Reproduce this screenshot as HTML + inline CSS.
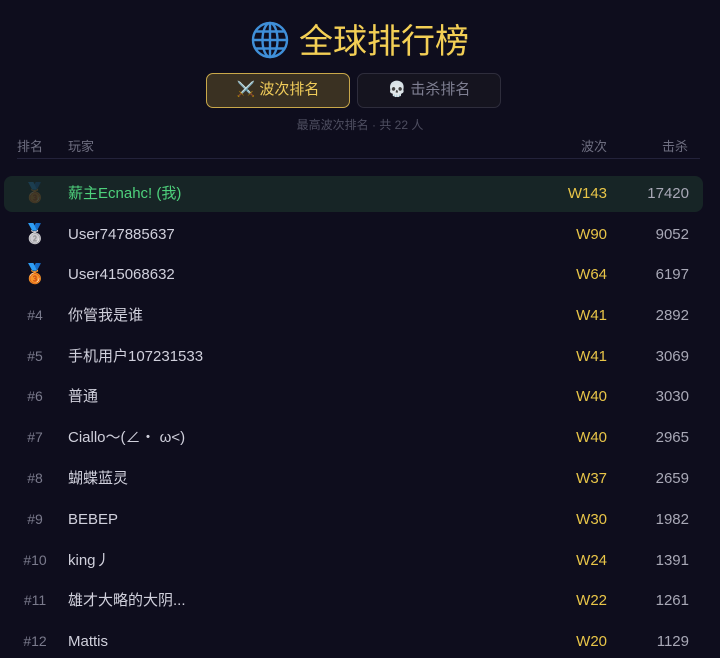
<!DOCTYPE html><html><head><meta charset="utf-8"><style>
body{margin:0;width:720px;height:658px;background:#0e0d1d;font-family:"Liberation Sans","Noto Sans CJK SC",sans-serif;overflow:hidden;position:relative;color:#c9c9d6}
.a{position:absolute;white-space:nowrap}
.title{left:0;width:720px;top:20px;text-align:center;font-size:34px;color:#f3cf55;font-weight:normal;line-height:44px}
.btn{top:73px;height:35px;border-radius:7px;box-sizing:border-box;font-size:15px;line-height:32px;text-align:center}
.hd{top:136px;font-size:13px;color:#6e6e80}
.row{font-size:15px;line-height:20px}
.rk{left:10px;width:50px;text-align:center;color:#7a7a8c;font-size:14px;top:-1px;line-height:20px}
.md{font-size:19px;left:10px;width:50px;text-align:center;top:-1px;line-height:22px}
.nm{left:68px;color:#d0d0dc;top:0}
.wv{right:113px;color:#e8c548;text-align:right;top:0}
.kl{right:31px;color:#a8a8b6;text-align:right;top:0}
</style></head><body>
<div class="a title"><span style="display:inline-block;vertical-align:-6px;margin-right:10px"><svg width="38" height="38" viewBox="0 0 38 38" fill="none" stroke="#3f8fd8" stroke-width="2.4"><circle cx="19" cy="19" r="17"/><ellipse cx="19" cy="19" rx="7.5" ry="17"/><line x1="19" y1="2" x2="19" y2="36"/><line x1="2" y1="19" x2="36" y2="19"/><line x1="5" y1="10.5" x2="33" y2="10.5"/><line x1="5" y1="27.5" x2="33" y2="27.5"/></svg></span>全球排行榜</div>
<div class="a btn" style="left:206px;width:144px;background:#3a3122;border:1.5px solid #c9a84a;color:#f0cc5a">⚔️ 波次排名</div>
<div class="a btn" style="left:357px;width:144px;background:#15141f;border:1.5px solid #2e2d3c;color:#7f7f92">💀 击杀排名</div>
<div class="a" style="left:0;width:720px;top:116px;text-align:center;font-size:12px;color:#4e4e60">最高波次排名 · 共 22 人</div>
<div class="a hd" style="left:17px">排名</div><div class="a hd" style="left:68px">玩家</div><div class="a hd" style="left:581px">波次</div><div class="a hd" style="left:662px">击杀</div>
<div class="a" style="left:17px;top:158px;width:683px;height:1px;background:#23223a"></div>
<div class="a" style="left:4px;top:176px;width:699px;height:36px;background:#172526;border-radius:8px"></div>
<div class="a row" style="top:184px;left:0;width:720px;height:20px"><span class="a md" style="opacity:.2">🥉</span><span class="a nm" style="color:#4ed17c">薪主Ecnahc! (我)</span><span class="a wv">W143</span><span class="a kl">17420</span></div>
<div class="a row" style="top:225px;left:0;width:720px;height:20px"><span class="a md">🥈</span><span class="a nm">User747885637</span><span class="a wv">W90</span><span class="a kl">9052</span></div>
<div class="a row" style="top:265px;left:0;width:720px;height:20px"><span class="a md">🥉</span><span class="a nm">User415068632</span><span class="a wv">W64</span><span class="a kl">6197</span></div>
<div class="a row" style="top:306px;left:0;width:720px;height:20px"><span class="a rk">#4</span><span class="a nm">你管我是谁</span><span class="a wv">W41</span><span class="a kl">2892</span></div>
<div class="a row" style="top:347px;left:0;width:720px;height:20px"><span class="a rk">#5</span><span class="a nm">手机用户107231533</span><span class="a wv">W41</span><span class="a kl">3069</span></div>
<div class="a row" style="top:387px;left:0;width:720px;height:20px"><span class="a rk">#6</span><span class="a nm">普通</span><span class="a wv">W40</span><span class="a kl">3030</span></div>
<div class="a row" style="top:428px;left:0;width:720px;height:20px"><span class="a rk">#7</span><span class="a nm">Ciallo～(∠・ ω&lt;)</span><span class="a wv">W40</span><span class="a kl">2965</span></div>
<div class="a row" style="top:469px;left:0;width:720px;height:20px"><span class="a rk">#8</span><span class="a nm">蝴蝶蓝灵</span><span class="a wv">W37</span><span class="a kl">2659</span></div>
<div class="a row" style="top:510px;left:0;width:720px;height:20px"><span class="a rk">#9</span><span class="a nm">BEBEP</span><span class="a wv">W30</span><span class="a kl">1982</span></div>
<div class="a row" style="top:551px;left:0;width:720px;height:20px"><span class="a rk">#10</span><span class="a nm">king丿</span><span class="a wv">W24</span><span class="a kl">1391</span></div>
<div class="a row" style="top:591px;left:0;width:720px;height:20px"><span class="a rk">#11</span><span class="a nm">雄才大略的大阴...</span><span class="a wv">W22</span><span class="a kl">1261</span></div>
<div class="a row" style="top:632px;left:0;width:720px;height:20px"><span class="a rk">#12</span><span class="a nm">Mattis</span><span class="a wv">W20</span><span class="a kl">1129</span></div>
</body></html>
